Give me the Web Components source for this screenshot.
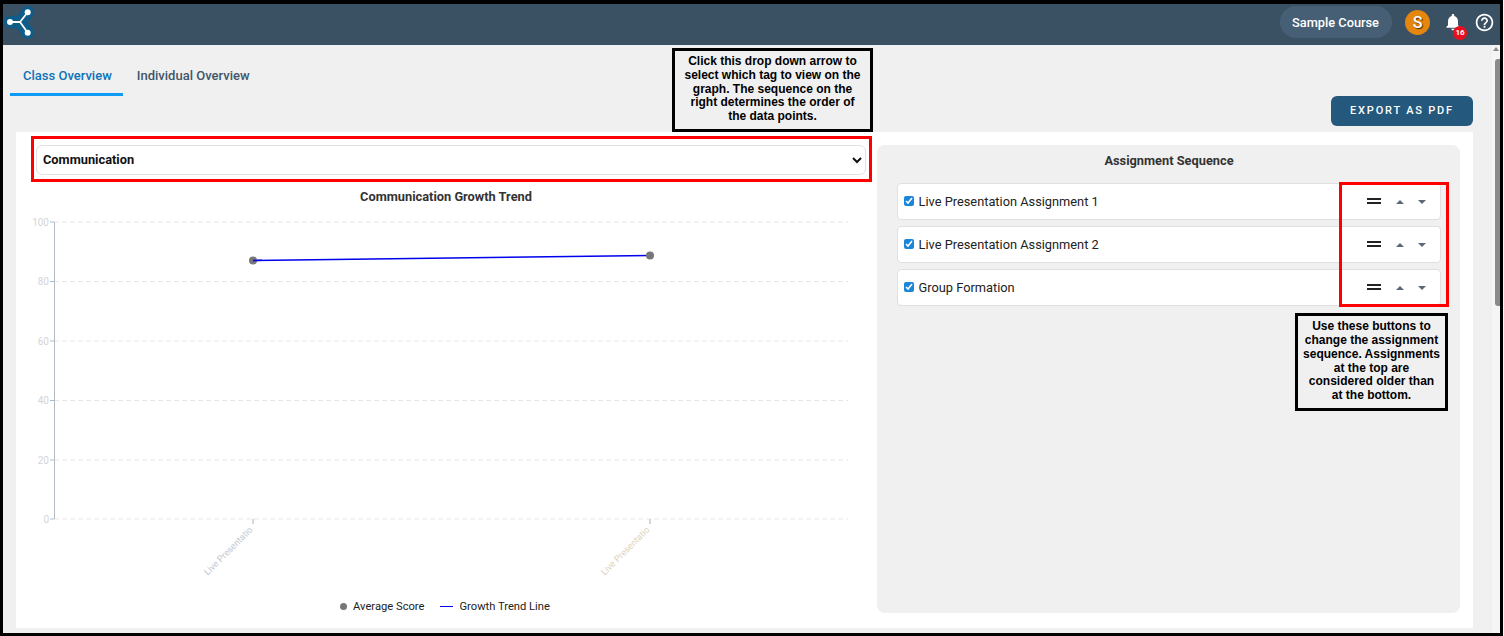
<!DOCTYPE html>
<html lang="en"><head><meta charset="utf-8"><title>Overview</title>
<style>
html,body{margin:0;padding:0;background:#f7f7f7;overflow:hidden}
body{font-family:Roboto,"Liberation Sans",sans-serif}
</style></head><body>
<app-screen>
  <app-header slot="header" course="Sample Course" initial="S" count="16"></app-header>
  <overview-page slot="main">
    <overview-tabs slot="tabs"></overview-tabs>
    <export-button slot="action">EXPORT AS PDF</export-button>
    <tag-select slot="select"></tag-select>
    <growth-chart slot="chart"></growth-chart>
    <sequence-panel slot="panel">
      <sequence-row>Live Presentation Assignment 1</sequence-row>
      <sequence-row>Live Presentation Assignment 2</sequence-row>
      <sequence-row>Group Formation</sequence-row>
    </sequence-panel>
  </overview-page>
  <side-scroll slot="scroll"></side-scroll>
  <call-out slot="over" kind="note" style="--pad:8px;left:669px;top:44px;width:195px;height:78px">Click this drop down arrow to select which tag to view on the graph. The sequence on the right determines the order of the data points.</call-out>
  <call-out slot="over" kind="note" style="--pad:4px;left:1292px;top:309px;width:147px;height:92px">Use these buttons to change the assignment sequence. Assignments at the top are considered older than at the bottom.</call-out>
  <call-out slot="over" kind="mark" style="left:28px;top:132px;width:835px;height:40px"></call-out>
  <call-out slot="over" kind="mark" style="left:1336px;top:178px;width:104px;height:119px"></call-out>
</app-screen>
<script>
function def(name, html, setup){
  customElements.define(name, class extends HTMLElement{
    constructor(){super();this.attachShadow({mode:'open'}).innerHTML=html;}
    connectedCallback(){if(setup)setup(this,this.shadowRoot);}
  });
}
def('app-screen',`<style>
:host{display:block;position:relative;box-sizing:border-box;width:1503px;height:636px;border:solid #000;border-width:4px 3px 3px 3px;font-family:Roboto,"Liberation Sans",sans-serif;background:#f0f0f0;overflow:hidden}
.col{display:flex;flex-direction:column;height:100%}
.row{flex:1;min-height:0;display:flex}
::slotted([slot=main]){flex:1;min-width:0}
</style><div class="col"><slot name="header"></slot><div class="row"><slot name="main"></slot><slot name="scroll"></slot></div></div><slot name="over"></slot>`);

def('app-header',`<style>
:host{display:flex;align-items:center;height:41px;flex:none;background:#3a5163;color:#fff;padding:0 5px 5px 1px;box-sizing:border-box}
.logo{width:36px;height:36px;margin-right:auto;display:block}
.pill{height:32px;width:112px;box-sizing:border-box;padding-right:1px;border-radius:16px;background:#475f75;display:flex;align-items:center;justify-content:center;font-size:12.8px;font-weight:500;margin-right:1px}
.av{width:25px;height:25px;border-radius:50%;background:#e5860f;margin-left:12px;display:flex;align-items:center;justify-content:center;font-size:16px;font-weight:500;text-shadow:1px 1px 1px #4a2b00}
.bell{position:relative;margin-left:13px;width:20px;height:20px}
.bell svg{display:block}
.badge{position:absolute;left:10px;top:13.7px;width:14px;height:14px;border-radius:50%;background:#e8101e;font-size:8px;font-weight:700;display:flex;align-items:center;justify-content:center}
.help{margin-left:11px;display:block;margin-top:1px}
</style>
<svg class="logo" viewBox="0 0 36 36" aria-label="logo"><g fill="none" stroke-linecap="round" stroke-linejoin="round"><path d="M6 18H16M16 18L23.7 8.3M16 18L23.7 28.7" stroke="#0e5d88" stroke-width="12.5"/><path d="M6 18H16M16 18L23.7 8.3M16 18L23.7 28.7" stroke="#fff" stroke-width="1.8"/></g><g fill="#fff"><circle cx="6" cy="18" r="3"/><circle cx="23.7" cy="8.3" r="3"/><circle cx="23.7" cy="28.7" r="3"/></g></svg>
<div class="pill" id="c"></div><div class="av" id="i"></div>
<div class="bell"><svg width="20" height="20" viewBox="0 0 24 24" fill="#fff"><path d="M12 22c1.1 0 2-.9 2-2h-4c0 1.1.9 2 2 2zm6-6v-5c0-3.07-1.63-5.64-4.5-6.32V4c0-.83-.67-1.5-1.5-1.5s-1.5.67-1.5 1.5v.68C7.64 5.36 6 7.92 6 11v5l-2 2v1h16v-1l-2-2z"/></svg><span class="badge" id="n"></span></div>
<svg class="help" width="21" height="21" viewBox="0 0 24 24" fill="#fff"><path d="M11 18h2v-2h-2v2zm1-16C6.48 2 2 6.48 2 12s4.48 10 10 10 10-4.48 10-10S17.52 2 12 2zm0 18c-4.41 0-8-3.59-8-8s3.59-8 8-8 8 3.59 8 8-3.59 8-8 8zm0-14c-2.21 0-4 1.79-4 4h2c0-1.1.9-2 2-2s2 .9 2 2c0 2-3 1.75-3 5h2c0-2.25 3-2.5 3-5 0-2.21-1.79-4-4-4z"/></svg>`,
(h,s)=>{s.getElementById('c').textContent=h.getAttribute('course');s.getElementById('i').textContent=h.getAttribute('initial');s.getElementById('n').textContent=h.getAttribute('count');});

def('overview-page',`<style>
:host{display:flex;flex-direction:column;box-sizing:border-box;padding:0 19px 5px 13px;background:#f0f0f0}
.tabs{margin-left:-6px;height:51px;flex:none;display:flex;align-items:flex-end}
.act{height:30px;margin-bottom:6px;flex:none;display:flex;justify-content:flex-end}
.card{flex:1;min-height:0;background:#fff;display:flex;gap:5px;padding:0 13px 15px 0}
.left{width:856px;flex:none;display:flex;flex-direction:column}
.right{flex:1;min-width:0;margin-top:13px;display:flex}
</style><div class="tabs"><slot name="tabs"></slot></div><div class="act"><slot name="action"></slot></div>
<div class="card"><div class="left"><slot name="select"></slot><slot name="chart"></slot></div><div class="right"><slot name="panel"></slot></div></div>`);

def('overview-tabs',`<style>
:host{display:flex;font-size:13px;font-weight:500;color:#415568}
.t{height:36px;box-sizing:border-box;padding:0 13px 6px 14px;display:flex;align-items:center}
.on{color:#0f72b8;border-bottom:3px solid #0e9bf5;padding:0 11px 3px 13px}
</style><div class="t on">Class Overview</div><div class="t">Individual Overview</div>`);

def('export-button',`<style>
:host{display:flex;align-items:center;justify-content:center;box-sizing:border-box;width:142px;height:30px;padding-bottom:2px;border-radius:6px;background:#24587c;color:#fff;font-size:11px;font-weight:500;letter-spacing:1.8px}
</style><slot></slot>`);

def('tag-select',`<style>
:host{display:block;padding:13px 6px 0 20px}
select{display:block;width:100%;height:30px;box-sizing:border-box;border:1px solid #e2e2e2;border-radius:6px;background:#fff;color:#111;font:700 12.8px Roboto,"Liberation Sans",sans-serif;padding:0 2px 2px;outline:none}
</style><select><option>Communication</option></select>`);

const rows=[[100,222],[80,281.5],[60,341],[40,400.5],[20,460],[0,519]];
def('growth-chart',`<style>
:host{display:flex;flex-direction:column;flex:1;min-height:0}
h3{margin:15px 0 0;font-size:12.8px;font-weight:700;color:#333;text-align:center;line-height:14px;padding-left:4px;}
svg{display:block;flex:none}
.lg{display:flex;justify-content:center;align-items:center;font-size:11.2px;color:#222;margin-top:7px;padding-left:2px}
.dot{width:7px;height:7px;border-radius:50%;background:#777;margin-right:6px}
.line{width:13px;height:1.5px;background:#0000ee;margin:0 6px 0 16px}
</style><h3>Communication Growth Trend</h3>
<svg id="s" width="856" height="389" viewBox="0 0 856 389" font-family="Roboto, Liberation Sans, sans-serif" font-size="10"></svg>
<div class="lg"><span class="dot"></span><span>Average Score</span><span class="line"></span><span>Growth Trend Line</span></div>`,
(h,s)=>{
  const top=204, ox=16; let m='';
  rows.forEach(([v,y])=>{const Y=y-top;
    m+=`<line x1="${54-ox}" x2="${848-ox}" y1="${Y}" y2="${Y}" stroke="#e6e6e6" stroke-dasharray="5 3"/>`;
    m+=`<line x1="${50-ox}" x2="${54-ox}" y1="${Y}" y2="${Y}" stroke="#b4bac2"/>`;
    m+=`<text x="${49-ox}" y="${Y+3.5}" text-anchor="end" fill="#d2d6da">${v}</text>`;});
  m+=`<line x1="${54.5-ox}" x2="${54.5-ox}" y1="${222-top}" y2="${519-top}" stroke="#b4bac2"/>`;
  [[253,'#c2c8d2'],[650,'#e0d2bc']].forEach(([x,c])=>{
    m+=`<line x1="${x-ox}" x2="${x-ox}" y1="${519-top}" y2="${524-top}" stroke="#a9b2bc"/>`;
    m+=`<text transform="translate(${x-4-ox} ${526-top}) rotate(-45)" text-anchor="end" font-size="9" fill="${c}" dy="6">Live Presentatio</text>`;});
  m+=`<line x1="${253-ox}" y1="${260.5-top}" x2="${650-ox}" y2="${255.5-top}" stroke="#0000ee" stroke-width="1.5"/>`;
  m+=`<circle cx="${253-ox}" cy="${260.5-top}" r="4" fill="#777"/><circle cx="${650-ox}" cy="${255.5-top}" r="4" fill="#777"/>`;
  m+=`<line x1="${253-ox}" y1="${260.5-top}" x2="${262-ox}" y2="${260.3-top}" stroke="#0000ee" stroke-width="1.5"/>`;
  s.getElementById('s').innerHTML=m;
});

def('sequence-panel',`<style>
:host{display:flex;flex-direction:column;flex:1;box-sizing:border-box;background:#f0f0f0;border-radius:8px;padding:8px 19px 0 20px;gap:6px}
h3{margin:0 0 9px;font-size:12.8px;font-weight:700;color:#333;text-align:center;line-height:15px}
</style><h3>Assignment Sequence</h3><slot></slot>`);

def('sequence-row',`<style>
:host{display:flex;align-items:center;box-sizing:border-box;height:37px;background:#fff;border:1px solid #e0e0e0;border-radius:4px;padding:0 14px 0 6px;font-size:12.8px;color:#222}
input{width:10px;height:10px;margin:0 4.6px 1px 0;accent-color:#1a86d9;flex:none}
.l{flex:1}
.e{width:14px;height:6px;box-sizing:border-box;border-top:2px solid #222;border-bottom:2px solid #222;margin:0 15px 2px 0}
.a{width:0;height:0}
.u{border-left:4px solid transparent;border-right:4px solid transparent;border-bottom:4px solid #5d6675;margin-right:14px}
.d{border-left:4.5px solid transparent;border-right:4.5px solid transparent;border-top:4px solid #5d6675}
</style><input type="checkbox" checked><span class="l"><slot></slot></span><span class="e"></span><span class="a u"></span><span class="a d"></span>`);

def('side-scroll',`<style>
:host{display:block;position:relative;width:8px;flex:none;background:#f5f5f5}
.up{position:absolute;left:1px;top:2px;width:0;height:0;border-left:3.5px solid transparent;border-right:3.5px solid transparent;border-bottom:4px solid #8a8a8a}
.th{position:absolute;left:3px;right:0;top:14px;height:247px;background:#8a8a8a;border-radius:3px 0 0 3px}
</style><div class="up"></div><div class="th"></div>`);

def('call-out',`<style>
:host{position:absolute;display:block;box-sizing:content-box;border:3px solid #000;font:700 12px/13.8px "Liberation Sans",Arial,sans-serif;color:#000;text-align:center}
:host([kind=note]){background:#f0f0f0;display:flex;align-items:center;justify-content:center}
:host([kind=mark]){border-color:#f00;background:transparent}
div{padding:0 var(--pad,0) 1px}
</style><div><slot></slot></div>`);
</script>
</body></html>
